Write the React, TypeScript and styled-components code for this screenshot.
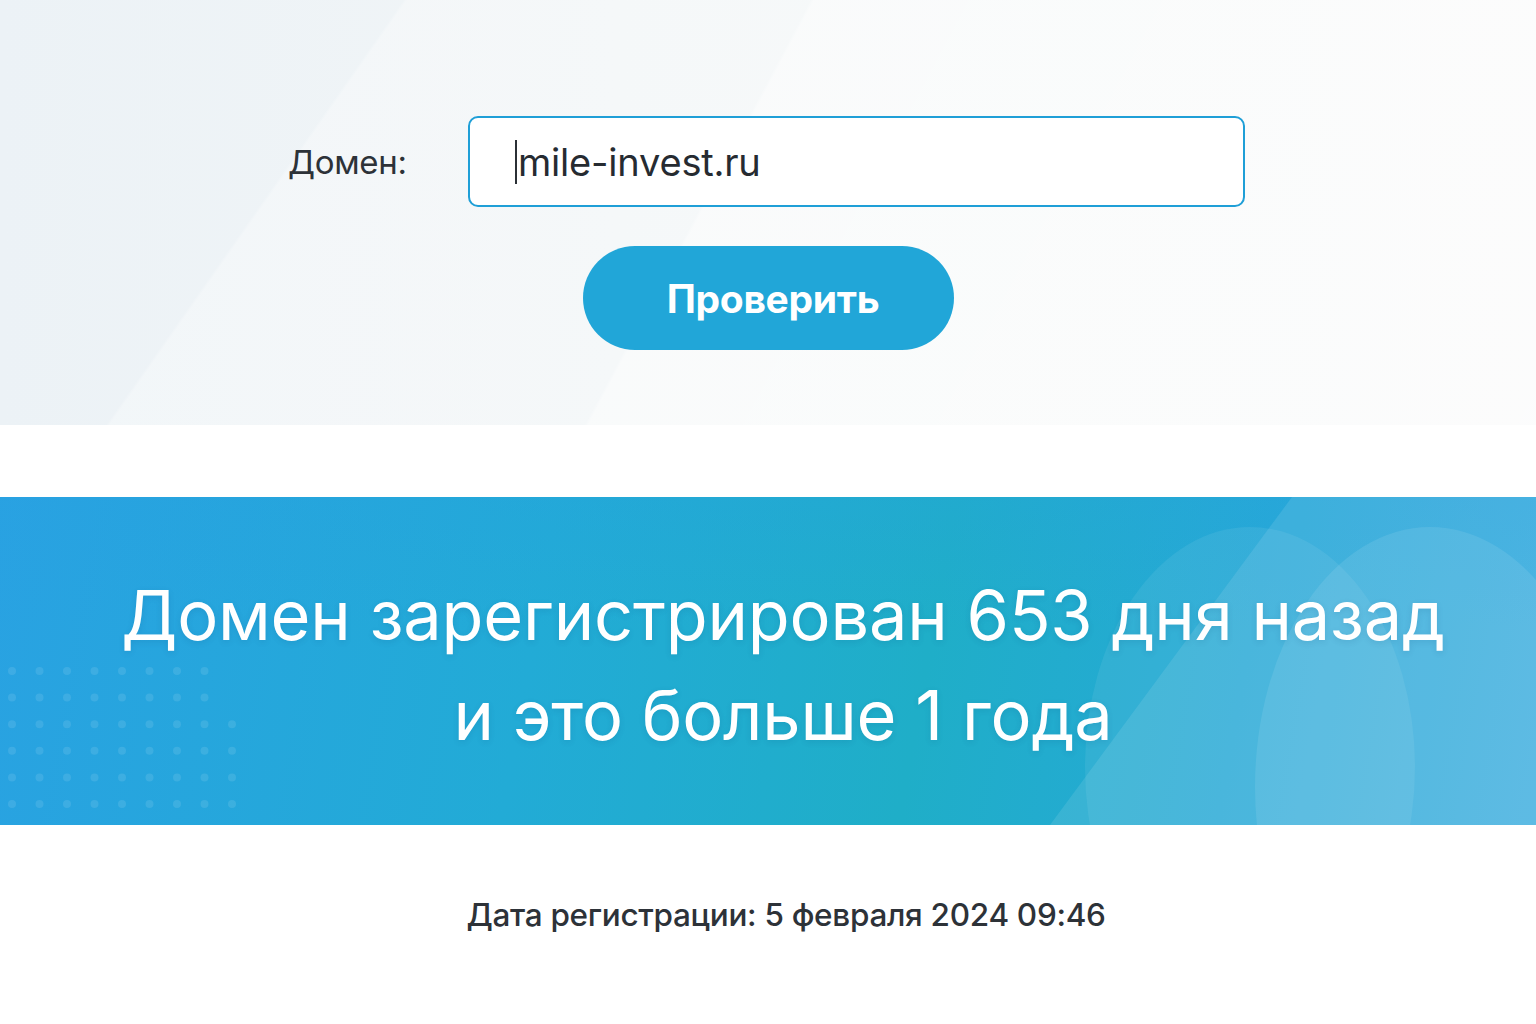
import React from "react";
import styled, { createGlobalStyle } from "styled-components";

const GlobalStyle = createGlobalStyle`
  html, body {
    margin: 0;
    padding: 0;
    background: #ffffff;
  }
  body {
    font-family: Inter, "Noto Sans", "Liberation Sans", sans-serif;
    color: #2b3036;
  }
`;

const Page = styled.div`
  width: 1536px;
  min-height: 1024px;
  display: flex;
  flex-direction: column;
  background: #ffffff;
  overflow: hidden;
`;

const Hero = styled.section`
  height: 425px;
  box-sizing: border-box;
  padding-top: 116px;
  display: flex;
  flex-direction: column;
  align-items: center;
  background:
    linear-gradient(118deg, rgba(255, 255, 255, 0) 0%, rgba(255, 255, 255, 0) 46%, rgba(255, 255, 255, 0.4) 46.2%, rgba(255, 255, 255, 0.5) 100%),
    linear-gradient(125deg, rgba(255, 255, 255, 0) 0%, rgba(255, 255, 255, 0) 22%, rgba(255, 255, 255, 0.3) 22.2%, rgba(255, 255, 255, 0.3) 100%),
    linear-gradient(90deg, #ecf2f6 0%, #f1f5f7 40%, #f6f7f8 100%);
`;

const FormRow = styled.div`
  display: flex;
  align-items: center;
  gap: 60px;
  margin-left: -3px;
`;

const Label = styled.label`
  font-size: 33px;
  font-weight: 400;
  color: #2d3238;
  letter-spacing: -0.3px;
  width: 120px;
`;

const InputBox = styled.div`
  width: 777px;
  height: 91px;
  box-sizing: border-box;
  border: 2px solid #1f9fd7;
  border-radius: 10px;
  background: #ffffff;
  display: flex;
  align-items: center;
  padding-left: 45px;
`;

const Caret = styled.span`
  width: 2px;
  height: 44px;
  background: #2b3036;
  margin-right: 1px;
`;

const InputText = styled.span`
  font-size: 38px;
  font-weight: 400;
  color: #262b31;
  letter-spacing: -0.2px;
`;

const CheckButton = styled.button`
  margin-top: 39px;
  width: 371px;
  height: 104px;
  padding: 0 0 0 10px;
  border: none;
  border-radius: 52px;
  background: #21a6d8;
  color: #ffffff;
  font-family: Inter, "Noto Sans", sans-serif;
  font-size: 39px;
  font-weight: 700;
  letter-spacing: -0.3px;
  cursor: pointer;
`;

const Gap = styled.div`
  height: 72px;
`;

const Banner = styled.section`
  position: relative;
  height: 328px;
  display: flex;
  align-items: center;
  justify-content: center;
  overflow: hidden;
  background:
    linear-gradient(180deg, rgba(40, 160, 225, 0.25) 0%, rgba(40, 160, 225, 0) 40%),
    linear-gradient(100deg, #29a2e2 0%, #22abd6 35%, #1faec8 60%, #26a9d6 80%, #3aaddf 100%);
`;

const Decor = styled.svg`
  position: absolute;
  inset: 0;
  pointer-events: none;
`;

const Heading = styled.h1`
  position: relative;
  margin: 10px 0 0 30px;
  text-align: center;
  color: #ffffff;
  font-size: 68.5px;
  font-weight: 400;
  line-height: 100px;
  letter-spacing: -0.2px;
  text-shadow: 0 2px 6px rgba(0, 60, 110, 0.12);
`;

const DateRow = styled.p`
  margin: 70px 0 0 36px;
  text-align: center;
  font-size: 31.5px;
  font-weight: 500;
  color: #2d3238;
  letter-spacing: -0.3px;
`;

const dots = () => {
  const items: JSX.Element[] = [];
  for (let r = 0; r < 6; r++) {
    for (let c = 0; c < 9; c++) {
      if (r < 2 && c === 8) continue;
      items.push(
        <circle key={`${r}-${c}`} cx={12 + c * 27.5} cy={174 + r * 26.6} r={4} fill="#ffffff" opacity={0.1} />
      );
    }
  }
  return items;
};

export default function App() {
  return (
    <Page>
      <GlobalStyle />
      <Hero>
        <FormRow>
          <Label>Домен:</Label>
          <InputBox>
            <Caret />
            <InputText>mile-invest.ru</InputText>
          </InputBox>
        </FormRow>
        <CheckButton>Проверить</CheckButton>
      </Hero>
      <Gap />
      <Banner>
        <Decor width="1536" height="328" viewBox="0 0 1536 328">
          <polygon points="1292,0 1536,0 1536,328 1050,328" fill="#ffffff" opacity="0.1" />
          <ellipse cx="1250" cy="270" rx="165" ry="240" fill="#ffffff" opacity="0.07" />
          <ellipse cx="1430" cy="290" rx="175" ry="260" fill="#ffffff" opacity="0.09" />
          {dots()}
        </Decor>
        <Heading>
          Домен зарегистрирован 653 дня назад
          <br />и это больше 1 года
        </Heading>
      </Banner>
      <DateRow>Дата регистрации: 5 февраля 2024 09:46</DateRow>
    </Page>
  );
}
